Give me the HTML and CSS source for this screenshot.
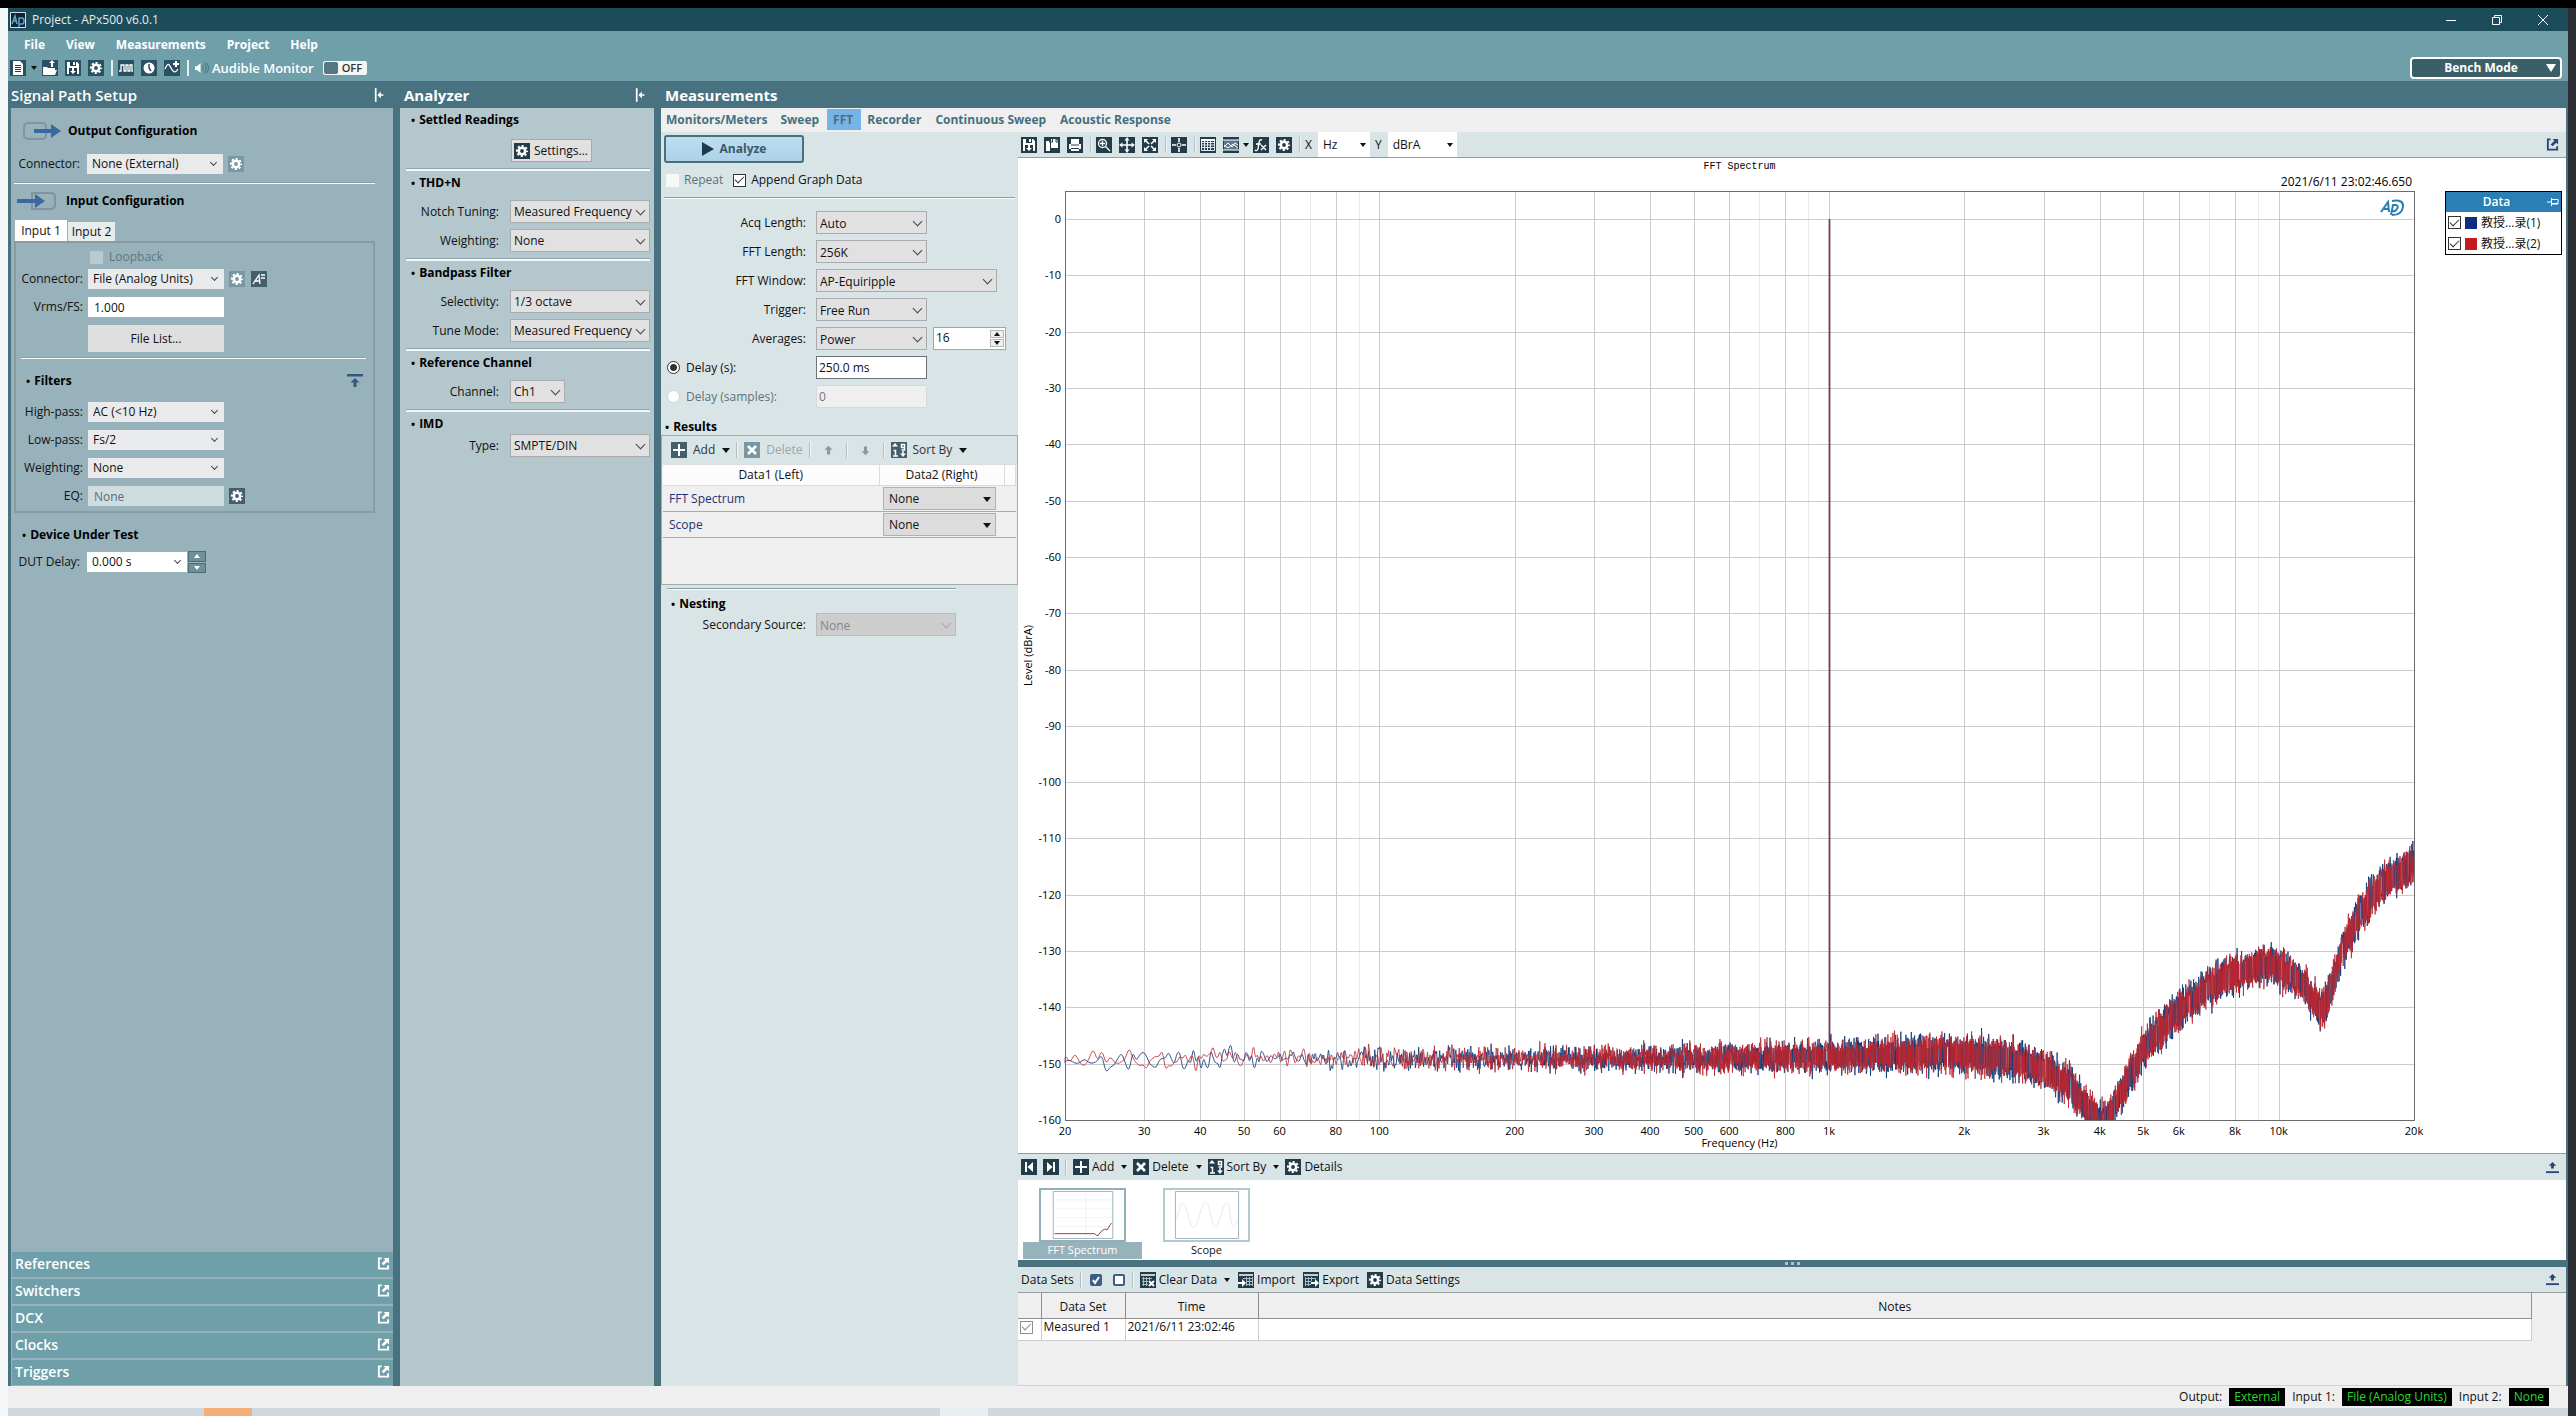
FILE: index.html
```html
<!DOCTYPE html>
<html lang="en">
<head>
<meta charset="utf-8">
<title>Project - APx500 v6.0.1</title>
<link rel="stylesheet" href="styles.css">
</head>
<body>
<svg class="sprite" aria-hidden="true">
  <symbol id="gear" viewBox="0 0 16 16"><circle cx="8" cy="8" r="3.2" fill="none" stroke="#fff" stroke-width="2.6"/><circle cx="8" cy="8" r="5.1" fill="none" stroke="#fff" stroke-width="2" stroke-dasharray="2.1 1.9" stroke-dashoffset="1"/></symbol>
  <symbol id="save" viewBox="0 0 16 16"><path d="M2 2h10l2 2v10H2z" fill="#fff"/><path d="M5 2h6v4H5z" fill="#233c4a"/><path d="M8 2h2v3H8z" fill="#fff"/><path d="M4 8h8v6H4z" fill="#233c4a"/><path d="M7 8h2v3h2l-3 3-3-3h2z" fill="#fff"/></symbol>
  <symbol id="doc" viewBox="0 0 16 16"><path d="M3 1h7l3 3v11H3z" fill="#fff"/><path d="M5 5.500h6M5 7.500h6M5 9.500h6M5 11.500h6" stroke="#233c4a"/></symbol>
  <symbol id="open" viewBox="0 0 16 16"><path d="M1 7h4l1 1h7v2h2l-2 5H1z" fill="#fff"/><path d="M9 7V3h-2l3-3 3 3h-2v4z" fill="#fff"/></symbol>
  <symbol id="pulse" viewBox="0 0 16 16"><path d="M1 11h2V5h3v6h2V5h2v6h2V5h2v6h1" fill="none" stroke="#fff" stroke-width="1.300"/></symbol>
  <symbol id="clock" viewBox="0 0 16 16"><circle cx="8" cy="8" r="5.500" fill="#fff"/><path d="M8 4v4l2 3" fill="none" stroke="#233c4a" stroke-width="1.400"/></symbol>
  <symbol id="wave" viewBox="0 0 16 16"><path d="M1 9c3-7 4-5 6-1s4 6 7 1" fill="none" stroke="#fff" stroke-width="1.300"/><path d="M12 1v6M9 4h6" stroke="#fff" stroke-width="2"/></symbol>
  <symbol id="speaker" viewBox="0 0 16 16"><path d="M1 6h2l4-3v10l-4-3H1z" fill="#fff"/><path d="M9 5q2 3 0 6M11 3q4 5 0 10M13 2q5 6 0 12" fill="none" stroke="#4b6f7a"/></symbol>
  <symbol id="copy" viewBox="0 0 16 16"><path d="M2 4h3l1 1v9H2zM7 2h5l2 2v7H7z" fill="#fff"/><path d="M8.500 2v3H5M12 2v3h2" fill="none" stroke="#233c4a"/></symbol>
  <symbol id="print" viewBox="0 0 16 16"><path d="M4 2h8v5h2v5h-2v2H4v-2H2V7h2z" fill="#fff"/><path d="M4 8h8M4 11.500h8" stroke="#233c4a"/></symbol>
  <symbol id="zoom" viewBox="0 0 16 16"><circle cx="6.500" cy="6.500" r="4" fill="none" stroke="#fff" stroke-width="1.300"/><path d="M6.500 4v5M4 6.500h5M9.500 9.500l4.500 4.500" stroke="#fff" stroke-width="1.300"/></symbol>
  <symbol id="move" viewBox="0 0 16 16"><path d="M8 3v10M3 8h10" stroke="#fff" stroke-width="1.600"/><path d="M8 0l2.500 3.500h-5zM8 16l2.500-3.500h-5zM0 8l3.500-2.500v5zM16 8l-3.500-2.500v5z" fill="#fff"/></symbol>
  <symbol id="expand" viewBox="0 0 16 16"><path d="M3 3l4 4M13 3L9 7M3 13l4-4M13 13L9 9" stroke="#fff" stroke-width="1.600"/><path d="M2 2h4L2 6zM14 2v4l-4-4zM2 14v-4l4 4zM14 14h-4l4-4z" fill="#fff"/></symbol>
  <symbol id="cross" viewBox="0 0 16 16"><path d="M8 1v4M8 11v4M1 8h4M11 8h4" stroke="#fff" stroke-width="1.600"/><circle cx="8" cy="8" r="2" fill="none" stroke="#fff"/></symbol>
  <symbol id="grid" viewBox="0 0 16 16"><path d="M1.500 3v10.500h13V3M1.500 5.500h13M1.500 8h13M1.500 10.500h13M4.500 3v10M7.500 3v10M10.500 3v10" fill="none" stroke="#dfe8ec"/><path d="M1 2h14v2H1z" fill="#fff"/></symbol>
  <symbol id="graph" viewBox="0 0 16 16"><path d="M1 3h14v10H1z" fill="#5e788a"/><path d="M0 3h16M0 13h16" stroke="#fff"/><path d="M1 10l4-4 4 4 3-4 3 2M1 8l4 3 5-4 5 4" fill="none" stroke="#fff"/></symbol>
  <symbol id="fx" viewBox="0 0 16 16"><path d="M9 3c-3-1-3 2-4 9-1 2-2 2-3 1M3 7h5M8 8l5 5M13 8l-5 5" fill="none" stroke="#fff" stroke-width="1.400"/></symbol>
  <symbol id="plus" viewBox="0 0 16 16"><path d="M8 2v12M2 8h12" stroke="#fff" stroke-width="2"/></symbol>
  <symbol id="ex" viewBox="0 0 16 16"><path d="M4 4l8 8M12 4l-8 8" stroke="#fff" stroke-width="2.600"/></symbol>
  <symbol id="sort" viewBox="0 0 16 16"><path d="M4 1l3 3.500H1zM12 15l3-3.500H9z" fill="#fff"/><path d="M2.500 8.500h2V14M2 14h5M13.500 6.500v-4h-3v3h3V8h-3M12 9v3" fill="none" stroke="#fff" stroke-width="1.500"/></symbol>
  <symbol id="first" viewBox="0 0 16 16"><path d="M4 3h2v10H4zM12 3v10L6.500 8z" fill="#fff"/></symbol>
  <symbol id="last" viewBox="0 0 16 16"><path d="M10 3h2v10h-2zM4 3v10l5.500-5z" fill="#fff"/></symbol>
  <symbol id="tclear" viewBox="0 0 16 16"><path d="M1 3h14" stroke="#fff" stroke-width="1.500"/><path d="M2 6.500h10M2 9.500h6M2 12.500h6M3.500 5v9M6.500 5v9M9.500 5v3" stroke="#aabcc6"/><path d="M9 9l5 5M14 9l-5 5" stroke="#fff" stroke-width="2"/></symbol>
  <symbol id="timport" viewBox="0 0 16 16"><path d="M1 3h14" stroke="#fff" stroke-width="1.500"/><path d="M5 6.500h10M8 9.500h7M8 12.500h7M8.500 5v9M11.500 5v9M14.500 5v9" stroke="#aabcc6"/><path d="M0 10h4V7l4 4-4 4v-3H0z" fill="#fff"/></symbol>
  <symbol id="texport" viewBox="0 0 16 16"><path d="M1 3h14" stroke="#fff" stroke-width="1.500"/><path d="M2 6.500h11M2 9.500h6M2 12.500h6M2.500 5v9M5.500 5v9M8.500 5v4" stroke="#aabcc6"/><path d="M8 10h4V7l4 4-4 4v-3H8z" fill="#fff"/></symbol>
  <symbol id="abox" viewBox="0 0 16 16"><path d="M2 13l6-9 1 9M4 10h5M10 4h4M10 7h4" fill="none" stroke="#fff" stroke-width="1.300"/></symbol>
  <symbol id="popout" viewBox="0 0 14 14"><path d="M5 1.500H2v11h10V9" fill="none" stroke="currentColor" stroke-width="2"/><path d="M7 1h6v6l-2-2-4 4-2-2 4-4z" fill="currentColor"/></symbol>
  <symbol id="pin" viewBox="0 0 14 16"><path d="M2 0v16" stroke="#fff" stroke-width="2"/><path d="M4 8l4-4v3h3v2H8v3z" fill="#fff"/></symbol>
  <symbol id="up" viewBox="0 0 14 14"><path d="M7 1l5 5H9v6H5V6H2z" fill="currentColor"/></symbol>
  <symbol id="down" viewBox="0 0 14 14"><path d="M7 13l5-5H9V2H5v6H2z" fill="currentColor"/></symbol>
  <symbol id="dock" viewBox="0 0 14 12"><path d="M0 10h14v2H0z" fill="currentColor"/><path d="M7 0l4 4H8.500v3h-3V4H3z" fill="currentColor"/></symbol>
  <symbol id="dockup" viewBox="0 0 16 13"><path d="M0 0h16v2.500H0zM8 4l4.500 4.500H9.500V13h-3V8.500h-3z" fill="currentColor"/></symbol>
</svg>

<div class="desk">
<div class="strip-left"></div>
<div class="window">
  <header class="titlebar">
    <svg class="logo" viewBox="0 0 16 16"><path d="M.5.500h15v15H.5z" fill="#12242f" stroke="#cfe0e6"/><path d="M2 12l3-8 2 8M3 9h4M9 15V6h3q2 0 2 3t-2 3H9" fill="none" stroke="#5fa4cc" stroke-width="1.500"/></svg>
    <h1>Project - APx500 v6.0.1</h1>
    <div class="winbtns">
      <button aria-label="Minimize"><svg viewBox="0 0 10 10"><path d="M0 5.500h10"/></svg></button>
      <button aria-label="Restore"><svg viewBox="0 0 10 10"><path d="M.5 2.500h7v7h-7zM2.500 2.500v-2h7v7h-2"/></svg></button>
      <button aria-label="Close"><svg viewBox="0 0 10 10"><path d="M0 0l10 10M10 0L0 10"/></svg></button>
    </div>
  </header>
  <div class="topbar">
    <div class="topleft">
      <nav class="menu"><button>File</button><button>View</button><button>Measurements</button><button>Project</button><button>Help</button></nav>
      <div class="maintools">
        <button class="ic" aria-label="New"><svg><use href="#doc"/></svg></button><i class="caret"></i>
        <button class="ic" aria-label="Open"><svg><use href="#open"/></svg></button>
        <button class="ic" aria-label="Save"><svg><use href="#save"/></svg></button>
        <button class="ic" aria-label="Options"><svg><use href="#gear"/></svg></button>
        <i class="bar"></i>
        <button class="ic" aria-label="Generator"><svg><use href="#pulse"/></svg></button>
        <button class="ic" aria-label="Clock"><svg><use href="#clock"/></svg></button>
        <button class="ic" aria-label="Add signal"><svg><use href="#wave"/></svg></button>
        <i class="bar"></i>
        <svg class="spk"><use href="#speaker"/></svg>
        <span class="monitor">Audible Monitor</span>
        <button class="toggle"><i></i>OFF</button>
      </div>
    </div>
    <button class="bench"><span>Bench Mode</span><i class="caret big"></i></button>
  </div>

  <main class="panels">
    <section class="panel signal">
      <header class="phead"><h2>Signal Path Setup</h2><svg class="pin"><use href="#pin"/></svg></header>
      <div class="signal-body">
        <h3 class="cfg"><svg viewBox="0 0 40 20"><rect x="2" y="2" width="22" height="16" rx="4" fill="none" stroke="#8392a0" stroke-width="2"/><path d="M12 8h17V3l10 7-10 7v-5H12z" fill="#3a689f"/></svg>Output Configuration</h3>
        <div class="frow out"><label for="oc">Connector:</label><span class="sel w-a"><select id="oc"><option>None (External)</option></select></span><button class="ic dim" aria-label="Output settings"><svg><use href="#gear"/></svg></button></div>
        <hr>
        <h3 class="cfg in"><svg viewBox="0 0 40 20"><path d="M15 2h18q5 0 5 4v8q0 4-5 4H15z" fill="none" stroke="#8392a0" stroke-width="2"/><path d="M0 8h18V3l10 7-10 7v-5H0z" fill="#3a689f"/></svg>Input Configuration</h3>
        <div class="itabs"><button class="on">Input 1</button><button>Input 2</button></div>
        <div class="group">
          <label class="loop"><input type="checkbox" disabled>Loopback</label>
          <div class="frow"><label for="ic">Connector:</label><span class="sel w-a"><select id="ic"><option>File (Analog Units)</option></select></span><button class="ic dim" aria-label="Input settings"><svg><use href="#gear"/></svg></button><button class="ic slate" aria-label="Units"><svg><use href="#abox"/></svg></button></div>
          <div class="frow"><label for="vr">Vrms/FS:</label><input class="w-a" id="vr" value="1.000"></div>
          <div class="frow"><span></span><button class="filelist w-a">File List...</button></div>
          <hr>
          <div class="ftitle"><h3>Filters</h3><svg><use href="#dockup"/></svg></div>
          <div class="frow"><label for="hp">High-pass:</label><span class="sel w-a"><select id="hp"><option>AC (&lt;10 Hz)</option></select></span></div>
          <div class="frow"><label for="lp">Low-pass:</label><span class="sel w-a"><select id="lp"><option>Fs/2</option></select></span></div>
          <div class="frow"><label for="wt">Weighting:</label><span class="sel w-a"><select id="wt"><option>None</option></select></span></div>
          <div class="frow"><label for="eq">EQ:</label><input class="w-a off" id="eq" value="None" disabled><button class="ic slate" aria-label="EQ settings"><svg><use href="#gear"/></svg></button></div>
        </div>
        <h3 class="dut">Device Under Test</h3>
        <div class="frow out"><label for="dd">DUT Delay:</label><span class="sel white"><select id="dd"><option>0.000 s</option></select></span><span class="spin"><button aria-label="Increase delay"><i class="tri-up"></i></button><button aria-label="Decrease delay"><i class="caret"></i></button></span></div>
      </div>
      <nav class="links">
        <a href="#references">References<svg><use href="#popout"/></svg></a>
        <a href="#switchers">Switchers<svg><use href="#popout"/></svg></a>
        <a href="#dcx">DCX<svg><use href="#popout"/></svg></a>
        <a href="#clocks">Clocks<svg><use href="#popout"/></svg></a>
        <a href="#triggers">Triggers<svg><use href="#popout"/></svg></a>
      </nav>
    </section>

    <section class="panel analyzer">
      <header class="phead"><h2>Analyzer</h2><svg class="pin"><use href="#pin"/></svg></header>
      <div class="an-body">
        <section><h3>Settled Readings</h3><button class="settings"><span class="ic"><svg><use href="#gear"/></svg></span>Settings...</button></section>
        <section><h3>THD+N</h3>
          <div class="arow"><label for="nt">Notch Tuning:</label><span class="sel box"><select id="nt"><option>Measured Frequency</option></select></span></div>
          <div class="arow"><label for="aw">Weighting:</label><span class="sel box"><select id="aw"><option>None</option></select></span></div></section>
        <section><h3>Bandpass Filter</h3>
          <div class="arow"><label for="se">Selectivity:</label><span class="sel box"><select id="se"><option>1/3 octave</option></select></span></div>
          <div class="arow"><label for="tm">Tune Mode:</label><span class="sel box"><select id="tm"><option>Measured Frequency</option></select></span></div></section>
        <section><h3>Reference Channel</h3>
          <div class="arow"><label for="ch">Channel:</label><span class="sel box short"><select id="ch"><option>Ch1</option></select></span></div></section>
        <section class="imd"><h3>IMD</h3>
          <div class="arow"><label for="ty">Type:</label><span class="sel box"><select id="ty"><option>SMPTE/DIN</option></select></span></div></section>
      </div>
    </section>

    <section class="panel measure">
      <header class="phead"><h2>Measurements</h2></header>
      <nav class="mtabs"><button>Monitors/Meters</button><button>Sweep</button><button class="on">FFT</button><button>Recorder</button><button>Continuous Sweep</button><button>Acoustic Response</button></nav>
      <div class="mbody">
        <div class="setup">
          <button class="analyze"><svg viewBox="0 0 12 14"><path d="M0 0l12 7-12 7z" fill="#1d3a4c"/></svg>Analyze</button>
          <div class="checks"><label class="gray"><input type="checkbox" disabled>Repeat</label><label><input type="checkbox" checked>Append Graph Data</label></div>
          <hr>
          <div class="mform">
            <label for="al">Acq Length:</label><span class="sel box"><select id="al"><option>Auto</option></select></span>
            <label for="fl">FFT Length:</label><span class="sel box"><select id="fl"><option>256K</option></select></span>
            <label for="fw">FFT Window:</label><span class="sel box wide"><select id="fw"><option>AP-Equiripple</option></select></span>
            <label for="tr">Trigger:</label><span class="sel box"><select id="tr"><option>Free Run</option></select></span>
            <label for="av">Averages:</label><div class="avg"><span class="sel box"><select id="av"><option>Power</option></select></span><span class="num"><input value="16" aria-label="Average count"><span class="nspin"><button aria-label="More"><i class="tri-up"></i></button><button aria-label="Fewer"><i class="caret"></i></button></span></span></div>
            <label class="radio"><input type="radio" name="delay" checked>Delay (s):</label><input class="txt" value="250.0 ms" aria-label="Delay seconds">
            <label class="radio gray"><input type="radio" name="delay" disabled>Delay (samples):</label><input class="txt" value="0" disabled aria-label="Delay samples">
          </div>
          <h3 class="res-title">Results</h3>
          <div class="results">
            <div class="rtools">
              <button><span class="ic slate"><svg><use href="#plus"/></svg></span>Add<i class="caret big"></i></button><i class="vsep"></i>
              <button disabled><span class="ic dim"><svg><use href="#ex"/></svg></span>Delete</button><i class="vsep"></i>
              <button class="arrow" aria-label="Move up" disabled><svg><use href="#up"/></svg></button><i class="vsep"></i>
              <button class="arrow" aria-label="Move down" disabled><svg><use href="#down"/></svg></button><i class="vsep"></i>
              <button><span class="ic slate"><svg><use href="#sort"/></svg></span>Sort By<i class="caret big"></i></button>
            </div>
            <table class="rtable">
              <thead><tr><th class="c1">Data1 (Left)</th><th class="c2">Data2 (Right)</th><th></th></tr></thead>
              <tbody>
                <tr><td><a href="#fft">FFT Spectrum</a></td><td><span class="sel solid"><select aria-label="FFT Spectrum right"><option>None</option></select></span></td><td></td></tr>
                <tr><td><a href="#scope">Scope</a></td><td><span class="sel solid"><select aria-label="Scope right"><option>None</option></select></span></td><td></td></tr>
              </tbody>
            </table>
          </div>
          <hr class="nest-hr">
          <h3 class="nest">Nesting</h3>
          <div class="mform"><label for="ss">Secondary Source:</label><span class="sel box mid disabled"><select id="ss" disabled><option>None</option></select></span></div>
        </div>

        <div class="view">
          <div class="gtools">
            <button class="ic" aria-label="Save graph"><svg><use href="#save"/></svg></button>
            <button class="ic" aria-label="Copy"><svg><use href="#copy"/></svg></button>
            <button class="ic" aria-label="Print"><svg><use href="#print"/></svg></button>
            <i class="vsep"></i>
            <button class="ic" aria-label="Zoom"><svg><use href="#zoom"/></svg></button>
            <button class="ic" aria-label="Pan"><svg><use href="#move"/></svg></button>
            <button class="ic" aria-label="Fit"><svg><use href="#expand"/></svg></button>
            <i class="vsep"></i>
            <button class="ic" aria-label="Cursor"><svg><use href="#cross"/></svg></button>
            <i class="vsep"></i>
            <button class="ic" aria-label="Data table"><svg><use href="#grid"/></svg></button>
            <button class="ic drop" aria-label="Graph options"><svg><use href="#graph"/></svg></button><i class="caret"></i>
            <button class="ic" aria-label="Function"><svg><use href="#fx"/></svg></button>
            <button class="ic" aria-label="Graph settings"><svg><use href="#gear"/></svg></button>
            <i class="vsep"></i>
            <label for="ux">X</label><span class="sel solid flat ux"><select id="ux"><option>Hz</option></select></span>
            <label for="uy">Y</label><span class="sel solid flat uy"><select id="uy"><option>dBrA</option></select></span>
            <button class="end" aria-label="Pop out"><svg><use href="#popout"/></svg></button>
          </div>
          <div class="chart">
            <svg id="plot" role="img" aria-label="FFT Spectrum"></svg>
            <aside class="legend">
              <header>Data<svg viewBox="0 0 12 8"><path d="M0 4h4M4.500 0v8M5 1.500h6v4H5M5 6h6" fill="none" stroke="#fff"/></svg></header>
              <label><input type="checkbox" checked><i class="blue"></i>教授...录(1)</label>
              <label><input type="checkbox" checked><i class="red"></i>教授...录(2)</label>
            </aside>
          </div>
          <div class="tbar first">
            <button class="ic" aria-label="First"><svg><use href="#first"/></svg></button>
            <button class="ic" aria-label="Last"><svg><use href="#last"/></svg></button>
            <i class="vsep"></i>
            <button class="tb"><span class="ic"><svg><use href="#plus"/></svg></span>Add<i class="caret"></i></button>
            <button class="tb"><span class="ic"><svg><use href="#ex"/></svg></span>Delete<i class="caret"></i></button>
            <button class="tb"><span class="ic"><svg><use href="#sort"/></svg></span>Sort By<i class="caret"></i></button>
            <button class="tb"><span class="ic"><svg><use href="#gear"/></svg></span>Details</button>
            <button class="end" aria-label="Collapse graphs"><svg><use href="#dock"/></svg></button>
          </div>
          <div class="thumbs">
            <figure class="on"><div><svg viewBox="0 0 68 54"><path d="M.5.500h67v53H.5z" fill="#fff" stroke="#90adb7"/><path d="M37 2v50M2 10h64M2 20h64M2 30h64M2 40h64" stroke="#eef2f3"/><path d="M2 48h45q3 3 4 2l3-4q5-5 7-2l3-5 2-3" fill="none" stroke="#8f2635"/></svg></div><figcaption>FFT Spectrum</figcaption></figure>
            <figure><div><svg viewBox="0 0 72 54"><path d="M.5.500h71v53H.5z" fill="#fff" stroke="#90adb7"/><path d="M2 32C7 8 10 8 15 28S23 44 28 26 36 8 40 26 47 44 52 26 60 8 62 26 66 44 71 32" fill="none" stroke="#e3e7e8"/></svg></div><figcaption>Scope</figcaption></figure>
          </div>
          <div class="splitter"><i></i><i></i><i></i></div>
          <div class="tbar second">
            <span class="dslabel">Data Sets</span><i class="vsep"></i>
            <button class="mini fill" aria-label="Check all"><svg viewBox="0 0 12 12"><path d="M3 6l2 3 4-6" fill="none" stroke="#fff" stroke-width="2"/></svg></button>
            <button class="mini" aria-label="Uncheck all"></button><i class="vsep"></i>
            <button class="tb"><span class="ic"><svg><use href="#tclear"/></svg></span>Clear Data<i class="caret"></i></button>
            <button class="tb"><span class="ic"><svg><use href="#timport"/></svg></span>Import</button>
            <button class="tb"><span class="ic"><svg><use href="#texport"/></svg></span>Export</button>
            <button class="tb"><span class="ic"><svg><use href="#gear"/></svg></span>Data Settings</button>
            <button class="end" aria-label="Collapse data sets"><svg><use href="#dock"/></svg></button>
          </div>
          <div class="sets">
            <table>
              <thead><tr><th class="k"></th><th class="s">Data Set</th><th class="t">Time</th><th>Notes</th></tr></thead>
              <tbody><tr><td><input type="checkbox" checked disabled aria-label="Measured 1"></td><td>Measured 1</td><td>2021/6/11 23:02:46</td><td></td></tr></tbody>
            </table>
          </div>
        </div>
      </div>
    </section>
  </main>
  <footer class="status">Output:<b>External</b>Input 1:<b>File (Analog Units)</b>Input 2:<b>None</b></footer>
  <div class="taskbar"><i class="app"></i><i class="lite"></i></div>
</div>
<div class="strip-right"></div>
</div>
<script src="plot.js"></script>
</body>
</html>
```
FILE: styles.css
```css
* { box-sizing: border-box; }
body { margin: 0; background: #000; color: #111; font: 12px/16px "Open Sans", "Noto Sans", "Noto Sans CJK SC", sans-serif; }
h1, h2, h3, figure { margin: 0; }
button, input, select { font: inherit; color: inherit; margin: 0; }
button { border: 0; padding: 0; background: none; white-space: nowrap; }
i { font-style: normal; flex: none; }
svg { display: block; flex: none; }
.sprite { position: absolute; width: 0; height: 0; }
hr { border: 0; height: 2px; margin: 0; background: #fafcfc; border-top: 1px solid #87a0a7; }

.desk { display: flex; min-height: 100vh; padding-top: 8px; }
.strip-left { width: 8px; background: #f4f6f7; }
.strip-right { width: 8px; background: #2c2d33; }
.window { flex: 1; min-width: 0; display: flex; flex-direction: column; }

.titlebar { height: 23px; background: #1c4c59; color: #e4ecee; display: flex; align-items: center; gap: 6px; padding: 0 20px 0 2px; }
.titlebar h1 { font-size: 12px; font-weight: 400; flex: 1; }
.logo { width: 16px; height: 16px; }
.winbtns { display: flex; gap: 36px; }
.winbtns svg { width: 10px; height: 10px; fill: none; stroke: #fff; }

.ic { width: 16px; height: 16px; background: #233c4a; display: inline-block; flex: none; }
.ic svg { width: 16px; height: 16px; }
.ic.slate { background: #455e6b; }
.ic.dim { background: #7897a2; }
.caret { width: 0; height: 0; border: 3px solid transparent; border-top: 4px solid #111; border-bottom: 0; }
.caret.big { border-width: 4px; border-top-width: 5px; border-bottom: 0; }
.tri-up { display: block; width: 0; height: 0; border: 3px solid transparent; border-bottom: 4px solid #111; border-top: 0; }

.topbar { height: 50px; background: #6fa0aa; color: #fff; display: flex; justify-content: space-between; align-items: flex-end; padding-right: 6px; }
.menu { display: flex; gap: 21px; padding: 0 16px; height: 28px; font-weight: 700; }
.maintools { display: flex; align-items: center; height: 22px; padding: 0 0 4px 2px; gap: 7px; }
.maintools > .ic { background: #2b5064; }
.maintools > .caret { margin: 0 -2px; }
.bar { width: 2px; height: 16px; background: #e6eef0; margin: 0 -2px 0 0; }
.spk { width: 15px; height: 16px; }
.monitor { font-weight: 600; margin-left: -4px; font-size: 13px; }
.toggle { display: flex; align-items: center; gap: 4px; width: 44px; height: 14px; background: #f4f6f6; color: #333; border-radius: 2px; font-size: 11px; line-height: 14px; font-weight: 600; margin-left: 2px; }
.toggle i { width: 14px; height: 12px; background: #587784; border-radius: 2px; margin-left: 1px; }
.bench { display: flex; align-items: center; width: 152px; height: 22px; background: #3b5f68; border: 2px solid #fff; border-radius: 4px; font-weight: 700; margin-bottom: 2px; padding-right: 4px; }
.bench span { flex: 1; text-align: center; padding: 0 2px 0 6px; }
.bench .caret { border: 5px solid transparent; border-top: 8px solid #fff; border-bottom: 0; }

.panels { flex: 1; display: grid; grid-template-columns: 382px 254px minmax(0, 1fr); gap: 7px; background: #48727f; padding: 0 2px 0 3px; }
.panel { display: flex; flex-direction: column; min-width: 0; }
.phead { height: 27px; display: flex; justify-content: space-between; align-items: center; color: #fff; padding: 0 7px 0 0; }
.phead h2 { font-size: 15px; font-weight: 600; line-height: 20px; }
.pin { width: 12px; height: 14px; }
.analyzer .phead, .measure .phead { padding-left: 4px; }
.analyzer h2, .measure h2 { font-weight: 700; }
h3 { font-size: 12px; font-weight: 700; color: #000; }

.sel { position: relative; display: inline-block; height: 20px; width: 111px; background: #e9eaeb; }
.sel select { appearance: none; width: 100%; height: 100%; border: 0; background: none; padding: 0 16px 0 5px; border-radius: 0; opacity: 1; }
.sel::after { content: ""; position: absolute; right: 7px; top: 6px; width: 4px; height: 4px; border: solid #444; border-width: 0 1px 1px 0; transform: rotate(45deg); pointer-events: none; }
.sel.white { width: 100px; background: #fff; }
.sel.box { height: 23px; background: #e1e1e1; border: 1px solid #a9acae; }
.sel.box select { padding: 0 14px 0 3px; }
.sel.box::after { width: 6px; height: 6px; right: 5px; }
.sel.solid::after { width: 0; height: 0; transform: none; border: 4px solid transparent; border-top: 5px solid #111; border-bottom: 0; right: 4px; top: 9px; }
.w-a { width: 136px; }

.signal > .signal-body { flex: 1; background: #97b2bb; padding: 13px 18px 0 3px; }
.cfg { display: flex; align-items: center; gap: 6px; height: 20px; padding-left: 8px; }
.cfg.in { padding-left: 3px; margin-top: 7px; gap: 9px; }
.cfg svg { width: 40px; height: 20px; }
.frow { display: flex; align-items: center; gap: 5px; height: 20px; margin-bottom: 8px; }
.frow > :first-child { width: 62px; text-align: right; }
.frow > .ic + .ic { margin-left: 1px; }
.out > :first-child { width: 66px; margin-right: 2px; }
.signal-body > .out { margin-top: 13px; }
.frow input { height: 20px; border: 0; background: #fff; padding: 0 6px; }
.frow input.off { background: #cfdde0; color: #5b6c78; }
.filelist { height: 27px; background: #dedede; }
.itabs { display: flex; align-items: flex-end; height: 30px; gap: 1px; padding-left: 1px; }
.itabs button { height: 19px; width: 47px; background: #e9ecec; }
.itabs .on { height: 21px; width: 52px; background: #fff; }
.group { border: 2px solid #8a9ba2; padding: 6px 7px 0 5px; height: 272px; }
.loop { display: flex; align-items: center; gap: 6px; color: #5f7780; margin: 0 0 4px 69px; height: 16px; }
.loop input, .checks .gray input { appearance: none; width: 13px; height: 13px; margin: 0; background: #b9c9ce; }
.group .frow:has(.filelist) { height: 27px; margin-bottom: 5px; }
.ftitle { display: flex; justify-content: space-between; align-items: center; height: 43px; padding: 0 3px 0 5px; color: #35597a; }
.ftitle svg { width: 16px; height: 13px; }
.signal h3:not(.cfg)::before, .analyzer h3::before, .setup h3::before { content: "•"; margin-right: 4px; font-size: 11px; }
.dut { margin: 14px 0 -4px 8px; }
.spin { display: flex; flex-direction: column; width: 18px; height: 22px; gap: 1px; margin-left: -4px; }
.spin button { flex: 1; background: #6f909b; border: 1px solid #4b6d7a; display: flex; align-items: center; justify-content: center; }
.spin .tri-up { border-bottom-color: #fff; }
.spin .caret { border-top-color: #fff; }

.links { background: #97b2bb; padding: 0 0 1px 1px; display: grid; gap: 2px; }
.links a { display: flex; justify-content: space-between; align-items: center; height: 25px; background: #6fa0aa; color: #fff; text-decoration: none; font-weight: 600; font-size: 14px; padding: 0 3px 2px; }
.links svg { width: 13px; height: 13px; }

.an-body { flex: 1; background: #b3c7cc; padding: 4px 4px 0 6px; }
.an-body section { border-bottom: 2px solid #f3f6f7; padding-bottom: 7px; margin-bottom: 4px; box-shadow: inset 0 -1px #8ea6ad; }
.an-body .imd { border: 0; box-shadow: none; }
.an-body h3 { height: 25px; line-height: 16px; padding-left: 5px; font-size: 12px; }
.an-body .imd h3 { height: 18px; }
.settings { display: flex; align-items: center; gap: 4px; width: 81px; height: 23px; background: #e1e1e1; border: 1px solid #a3a9ac; padding-left: 2px; margin: 2px 0 0 105px; }
.arow { display: flex; justify-content: space-between; align-items: center; margin-bottom: 6px; }
.arow:last-child { margin-bottom: 0; }
.arow label { width: 93px; text-align: right; }
.arow .sel { width: 140px; }
.arow .short { width: 55px; margin-right: 85px; }

.mtabs { height: 24px; background: #efefef; display: flex; padding: 1px 0 2px; font-size: 12px; font-weight: 700; color: #44707f; }
.mtabs button { padding: 0 8px 0 5px; }
.mtabs .on { background: #76b4e8; color: #536c7d; }
.mtabs .on, .mtabs .on ~ button { padding-left: 6px; }
.mbody { flex: 1; display: flex; background: #d9e4e6; }
.setup { width: 357px; flex: none; padding-top: 3px; }
.analyze { display: flex; align-items: center; justify-content: center; gap: 6px; width: 140px; height: 28px; margin-left: 3px; background: linear-gradient(#c0ddf0, #acd1e8); border: 2px solid #48707f; border-radius: 3px; color: #355a6d; font-weight: 700; font-size: 12px; }
.analyze svg { width: 12px; height: 14px; }
.checks { display: flex; gap: 10px; height: 14px; margin: 10px 5px 10px; align-items: center; }
.checks label { display: flex; align-items: center; gap: 5px; }
.gray { color: #5d7278; }
.checks .gray input { background: #f7f9f9; }
.checks input { width: 13px; height: 13px; margin: 0; }
.checks input:checked, .legend input, .sets input { appearance: none; width: 13px; height: 13px; margin: 0; border: 1px solid #333; background: #fff; display: grid; place-items: center; }
.checks input:checked::after, .legend input::after, .sets input::after { content: ""; width: 8px; height: 4px; border: solid #333; border-width: 0 0 1px 1px; transform: rotate(-45deg); margin-bottom: 3px; }
.setup hr { margin: 0 3px; }
.mform { display: grid; grid-template-columns: 145px 1fr; gap: 6px 10px; align-items: center; text-align: right; padding-top: 12px; }
.mform > * { height: 23px; justify-self: start; line-height: 23px; }
.mform > label { justify-self: end; }
.mform > .radio { justify-self: start; display: flex; align-items: center; gap: 6px; padding-left: 6px; }
.radio input { width: 13px; height: 13px; appearance: none; border: 1px solid #333; border-radius: 50%; background: #fff; }
.radio input:checked { background: radial-gradient(#333 0 3px, #fff 4px); }
.radio input:disabled { border-color: #d0d5d6; }
.sel.wide { width: 181px; }
.sel.mid { width: 140px; }
.sel.disabled { background: #cdcdcd; border-color: #bbb; color: #858585; }
.sel.disabled::after { border-color: #a9a9a9; }
.avg { display: flex; gap: 6px; }
.num { display: flex; width: 73px; height: 23px; background: #fff; border: 1px solid #a0a5a8; }
.num input { flex: 1; min-width: 0; border: 0; padding: 0 2px; background: none; height: 19px; }
.nspin { display: grid; width: 14px; margin: 2px 1px; gap: 1px; }
.nspin button { border: 1px solid #b4b8ba; background: #efefef; display: grid; place-items: center; }
.txt { width: 111px; border: 1px solid #6c7478; background: #fff; padding: 0 2px; }
.txt:disabled { background: #efefef; border-color: #d5d9da; color: #757575; }
.res-title { margin: 10px 0 0 4px; height: 17px; line-height: 18px; }
.results { border: 1px solid #a6aaac; background: #efefef; height: 150px; }
.rtools { display: flex; align-items: center; height: 28px; background: #d9e4e6; padding-left: 9px; gap: 6px; }
.rtools button { display: flex; align-items: center; gap: 6px; color: #333; }
.rtools button:disabled { color: #9aa7ab; }
.rtools .caret { margin-left: 1px; }
.arrow { width: 23px; justify-content: center; }
.arrow svg { width: 11px; height: 11px; color: #8c9aa0; }
.vsep { width: 2px; height: 16px; background: #b3bec1; border-right: 1px solid #f2f6f6; }
.rtable { width: 353px; margin-left: 1px; border-collapse: collapse; table-layout: fixed; }
.rtable th { height: 21px; background: #fcfcfc; font-weight: 400; padding: 0; border: 1px solid #dcdcdc; border-width: 1px 1px 1px 0; }
.rtable .c1 { width: 216px; }
.rtable .c2 { width: 125px; }
.rtable td { height: 26px; padding: 0 4px; border-bottom: 1px solid #aaa; }
.rtable td:first-child { padding-left: 6px; }
.rtable a { color: #1e3273; text-decoration: none; }
.rtable .sel { display: block; width: 113px; height: 23px; background: #dcdcdc; border: 1px solid #b0b0b0; }
.setup .nest-hr { width: 289px; margin: 3px 0 0 6px; }
.nest { margin: 6px 0 0 10px; height: 17px; }
.nest + .mform { padding-top: 0; }

.view { flex: 1; min-width: 0; display: flex; flex-direction: column; background: #fff; }
.gtools { display: flex; align-items: center; height: 26px; background: #d9e4e6; border-bottom: 1px solid #979c9e; padding: 0 7px 0 3px; }
.gtools > .ic { margin-right: 7px; }
.gtools > .drop { margin-right: 4px; }
.gtools > .caret { margin-right: 4px; }
.gtools > .vsep { margin: 0 4px 0 0; }
.sel.flat { height: 25px; background: #fff; }
.sel.flat::after { border-width: 3px; border-top-width: 4px; border-bottom: 0; top: 11px; }
.ux.sel { width: 52px; margin: 0 5px 0 6px; }
.uy.sel { width: 69px; margin-left: 6px; }
.end { margin-left: auto; color: #28467c; }
.end svg { width: 13px; height: 13px; }
.chart { flex: 1; display: flex; align-items: flex-start; }
#plot { flex: 1; min-width: 0; width: 100%; align-self: stretch; min-height: 400px; font-size: 11px; }
.legend { width: 117px; margin: 33px 4px 0 0; border: 1px solid #000; }
.legend header { height: 20px; line-height: 20px; background: #2b7fb5; color: #fff; font-weight: 600; display: grid; grid-template-columns: 1fr 12px; align-items: center; text-align: center; padding: 0 2px 0 0; }
.legend svg { width: 12px; height: 8px; }
.legend label { display: flex; align-items: center; gap: 4px; height: 21px; padding-left: 2px; white-space: nowrap; }
.legend label i { width: 12px; height: 12px; }
.blue { background: #0e2f80; }
.red { background: #c41a1c; }

.tbar { display: flex; align-items: center; height: 26px; background: #d9e4e6; border-bottom: 1px solid #979c9e; padding: 0 7px 0 3px; gap: 6px; }
.tbar.first { height: 27px; border-top: 1px solid #979c9e; border-bottom: 0; }
.tb { display: flex; align-items: center; gap: 3px; }
.tb .caret { margin: 0 0 0 4px; }
.second .tb + .tb { margin-left: 2px; }
.second .vsep { margin: 0; }
.mini { width: 12px; height: 12px; background: #fff; border: 2px solid #3c5f84; border-radius: 2px; margin-left: 2px; }
.mini + .mini { margin: 0 1px 0 5px; }
.mini.fill { background: #3c5f84; border: 0; }
.thumbs { height: 80px; display: flex; gap: 5px; padding: 8px 5px 0; }
.thumbs figure { width: 119px; text-align: center; }
.thumbs figure > div { width: 87px; height: 54px; margin: 0 auto; border: 2px solid #b4c9cd; padding: 1px; background: #fff; display: grid; place-items: center; }
.thumbs .on > div { border-color: #93b0b9; }
.thumbs svg { height: 48px; width: 74px; }
.thumbs figcaption { height: 17px; line-height: 16px; font-size: 11px; }
.thumbs .on figcaption { background: #97b2bb; color: #fff; }
.splitter { height: 7px; background: #48727f; display: flex; justify-content: center; align-items: center; gap: 3px; }
.splitter i { width: 3px; height: 3px; background: #a9c6d0; }
.sets { height: 93px; background: #efefef; border-bottom: 1px solid #d2d2d2; padding-right: 34px; }
.sets table { width: 100%; border-collapse: collapse; table-layout: fixed; background: #fff; }
.sets th { height: 25px; background: #efefef; font-weight: 400; padding: 3px 0 0; border: solid #8f8f8f; border-width: 0 1px 1px 0; }
.sets td { height: 22px; padding: 0 2px 4px; border: solid #ccc; border-width: 0 1px 1px 0; }
.sets .k { width: 23px; }
.sets .s { width: 84px; }
.sets .t { width: 133px; }
.sets input { border-color: #8d8d8d; }
.sets input::after { border-color: #888; }

.status { height: 22px; background: #efefef; display: flex; align-items: center; justify-content: flex-end; gap: 7px; padding-right: 19px; }
.status b { font-weight: 400; background: #000; color: #2cd82c; padding: 0 5px; height: 18px; line-height: 17px; }
.taskbar { height: 8px; background: #cfd8df; display: flex; }
.app { width: 48px; background: #f4ae78; margin-left: 196px; }
.lite { width: 48px; background: #e9eef1; margin-left: 688px; }
```
FILE: plot.js
```js
(function () {
  var NS = 'http://www.w3.org/2000/svg';
  var svg = document.getElementById('plot');

  // Noise floor centre line: frequency in Hz, level in dBrA
  var floor = [[20, -149.2], [500, -149.1], [1000, -148.7], [2000, -148.2], [2500, -149.2], [3000, -151], [3500, -154.3],
    [3800, -158.5], [4000, -160.5], [4200, -159.5], [4440, -155.6], [5000, -147.5], [6000, -140.6], [7000, -136.6], [8000, -134],
    [9000, -132.6], [9500, -132.4], [10000, -132.9], [11000, -135], [11500, -136.8], [12000, -139], [12400, -140.7],
    [12800, -139], [13200, -135], [13900, -129.5], [15100, -123.5], [17000, -118], [20000, -114.3]];

  function level(f) {
    for (var i = 1; i < floor.length; i++) {
      if (f <= floor[i][0]) {
        var a = floor[i - 1], b = floor[i];
        return a[1] + (b[1] - a[1]) * Math.log(f / a[0]) / Math.log(b[0] / a[0]);
      }
    }
    return floor[floor.length - 1][1];
  }

  function random(seed) {
    return function () {
      seed = (seed * 1664525 + 1013904223) % 4294967296;
      return seed / 4294967296;
    };
  }

  function add(tag, attrs, text) {
    var el = document.createElementNS(NS, tag);
    for (var k in attrs) el.setAttribute(k, attrs[k]);
    if (text !== undefined) el.textContent = text;
    svg.appendChild(el);
    return el;
  }

  function draw() {
    svg.textContent = '';
    var W = svg.clientWidth, H = svg.clientHeight;
    var L = 47, R = W - 31, T = 33, B = H - 33;
    var X = function (f) { return L + (R - L) * Math.log10(f / 20) / 3; };
    var Y = function (d) { return T + (B - T) * (5 - d) / 165; };
    var half = function (v) { return Math.round(v) + 0.5; };

    for (var dec = 10; dec <= 10000; dec *= 10) {
      for (var m = 1; m < 10; m++) {
        var f = dec * m;
        if (f <= 20 || f >= 20000) continue;
        var minor = m === 7 || m === 9;
        add('line', { x1: half(X(f)), x2: half(X(f)), y1: T, y2: B, stroke: minor ? '#e9e9e9' : '#c9cbcc' });
        if (!minor) add('text', { x: X(f), y: B + 15, 'text-anchor': 'middle' }, f >= 1000 ? f / 1000 + 'k' : f);
      }
    }
    add('text', { x: L, y: B + 15, 'text-anchor': 'middle' }, '20');
    add('text', { x: R, y: B + 15, 'text-anchor': 'middle' }, '20k');
    for (var d = 0; d >= -160; d -= 10) {
      if (d > -160) add('line', { x1: L, x2: R, y1: half(Y(d)), y2: half(Y(d)), stroke: '#c9cbcc' });
      add('text', { x: L - 4, y: Y(d) + 4, 'text-anchor': 'end' }, d);
    }

    function trace(seed, color, opacity) {
      var rnd = random(seed), x = L, px = L, py = Y(-149.8);
      function g() { return (rnd() + rnd() + rnd() + rnd() - 2) * 1.7; }
      var p = 'M' + px + ' ' + py.toFixed(1);
      while (x <= R) {
        var f = 20 * Math.pow(10, 3 * (x - L) / (R - L));
        // Bins crowd together with frequency, so each pixel column spans a wider range
        var t = Math.max(0, Math.min(1, Math.log(f / 300) / Math.log(8)));
        var v = g() * (1.1 + 0.15 * t);
        v += (v > 0 ? 1 : -1) * 1.3 * t;
        var y = Math.min(B, Y(level(f) + v));
        if (f < 90) p += 'Q' + px.toFixed(1) + ' ' + py.toFixed(1) + ' ' + ((px + x) / 2).toFixed(1) + ' ' + ((py + y) / 2).toFixed(1);
        else p += 'L' + x.toFixed(1) + ' ' + y.toFixed(1);
        px = x;
        py = y;
        x += Math.max(0.3, 5 * 20 / f);
      }
      add('path', { d: p, fill: 'none', stroke: color, 'stroke-opacity': opacity, 'stroke-linejoin': 'round' });
      add('path', { d: 'M' + half(X(1000)) + ' ' + Y(0) + 'V' + Y(-149), stroke: color, 'stroke-opacity': opacity, 'stroke-width': 1.5 });
    }
    trace(17, '#123a78', 0.85);
    trace(911, '#b92630', 0.8);

    add('rect', { x: L + 0.5, y: T + 0.5, width: R - L, height: B - T, fill: 'none', stroke: '#6b6b6b' });
    add('text', { x: (L + R) / 2, y: 11, 'text-anchor': 'middle', 'font-family': 'Liberation Mono, monospace', 'font-size': 10 }, 'FFT Spectrum');
    add('text', { x: R - 2, y: T - 5, 'text-anchor': 'end', 'font-size': 12 }, '2021/6/11 23:02:46.650');
    add('text', { x: (L + R) / 2, y: B + 27, 'text-anchor': 'middle' }, 'Frequency (Hz)');
    var yc = (T + B) / 2;
    add('text', { x: 14, y: yc, 'text-anchor': 'middle', transform: 'rotate(-90 14 ' + yc + ')' }, 'Level (dBrA)');
    // Brand mark in the plot corner
    add('path', { d: 'M1 13L8 3L9 13M4 10H9M11 16L13 6H16Q19 7 17 10T12 12M12 2Q24 0 23 8T12 16', fill: 'none', stroke: '#2a7fb2', 'stroke-width': 2,
      transform: 'translate(' + (R - 34) + ' ' + (T + 8) + ')' });
  }

  draw();
  window.addEventListener('resize', draw);
}());
```
